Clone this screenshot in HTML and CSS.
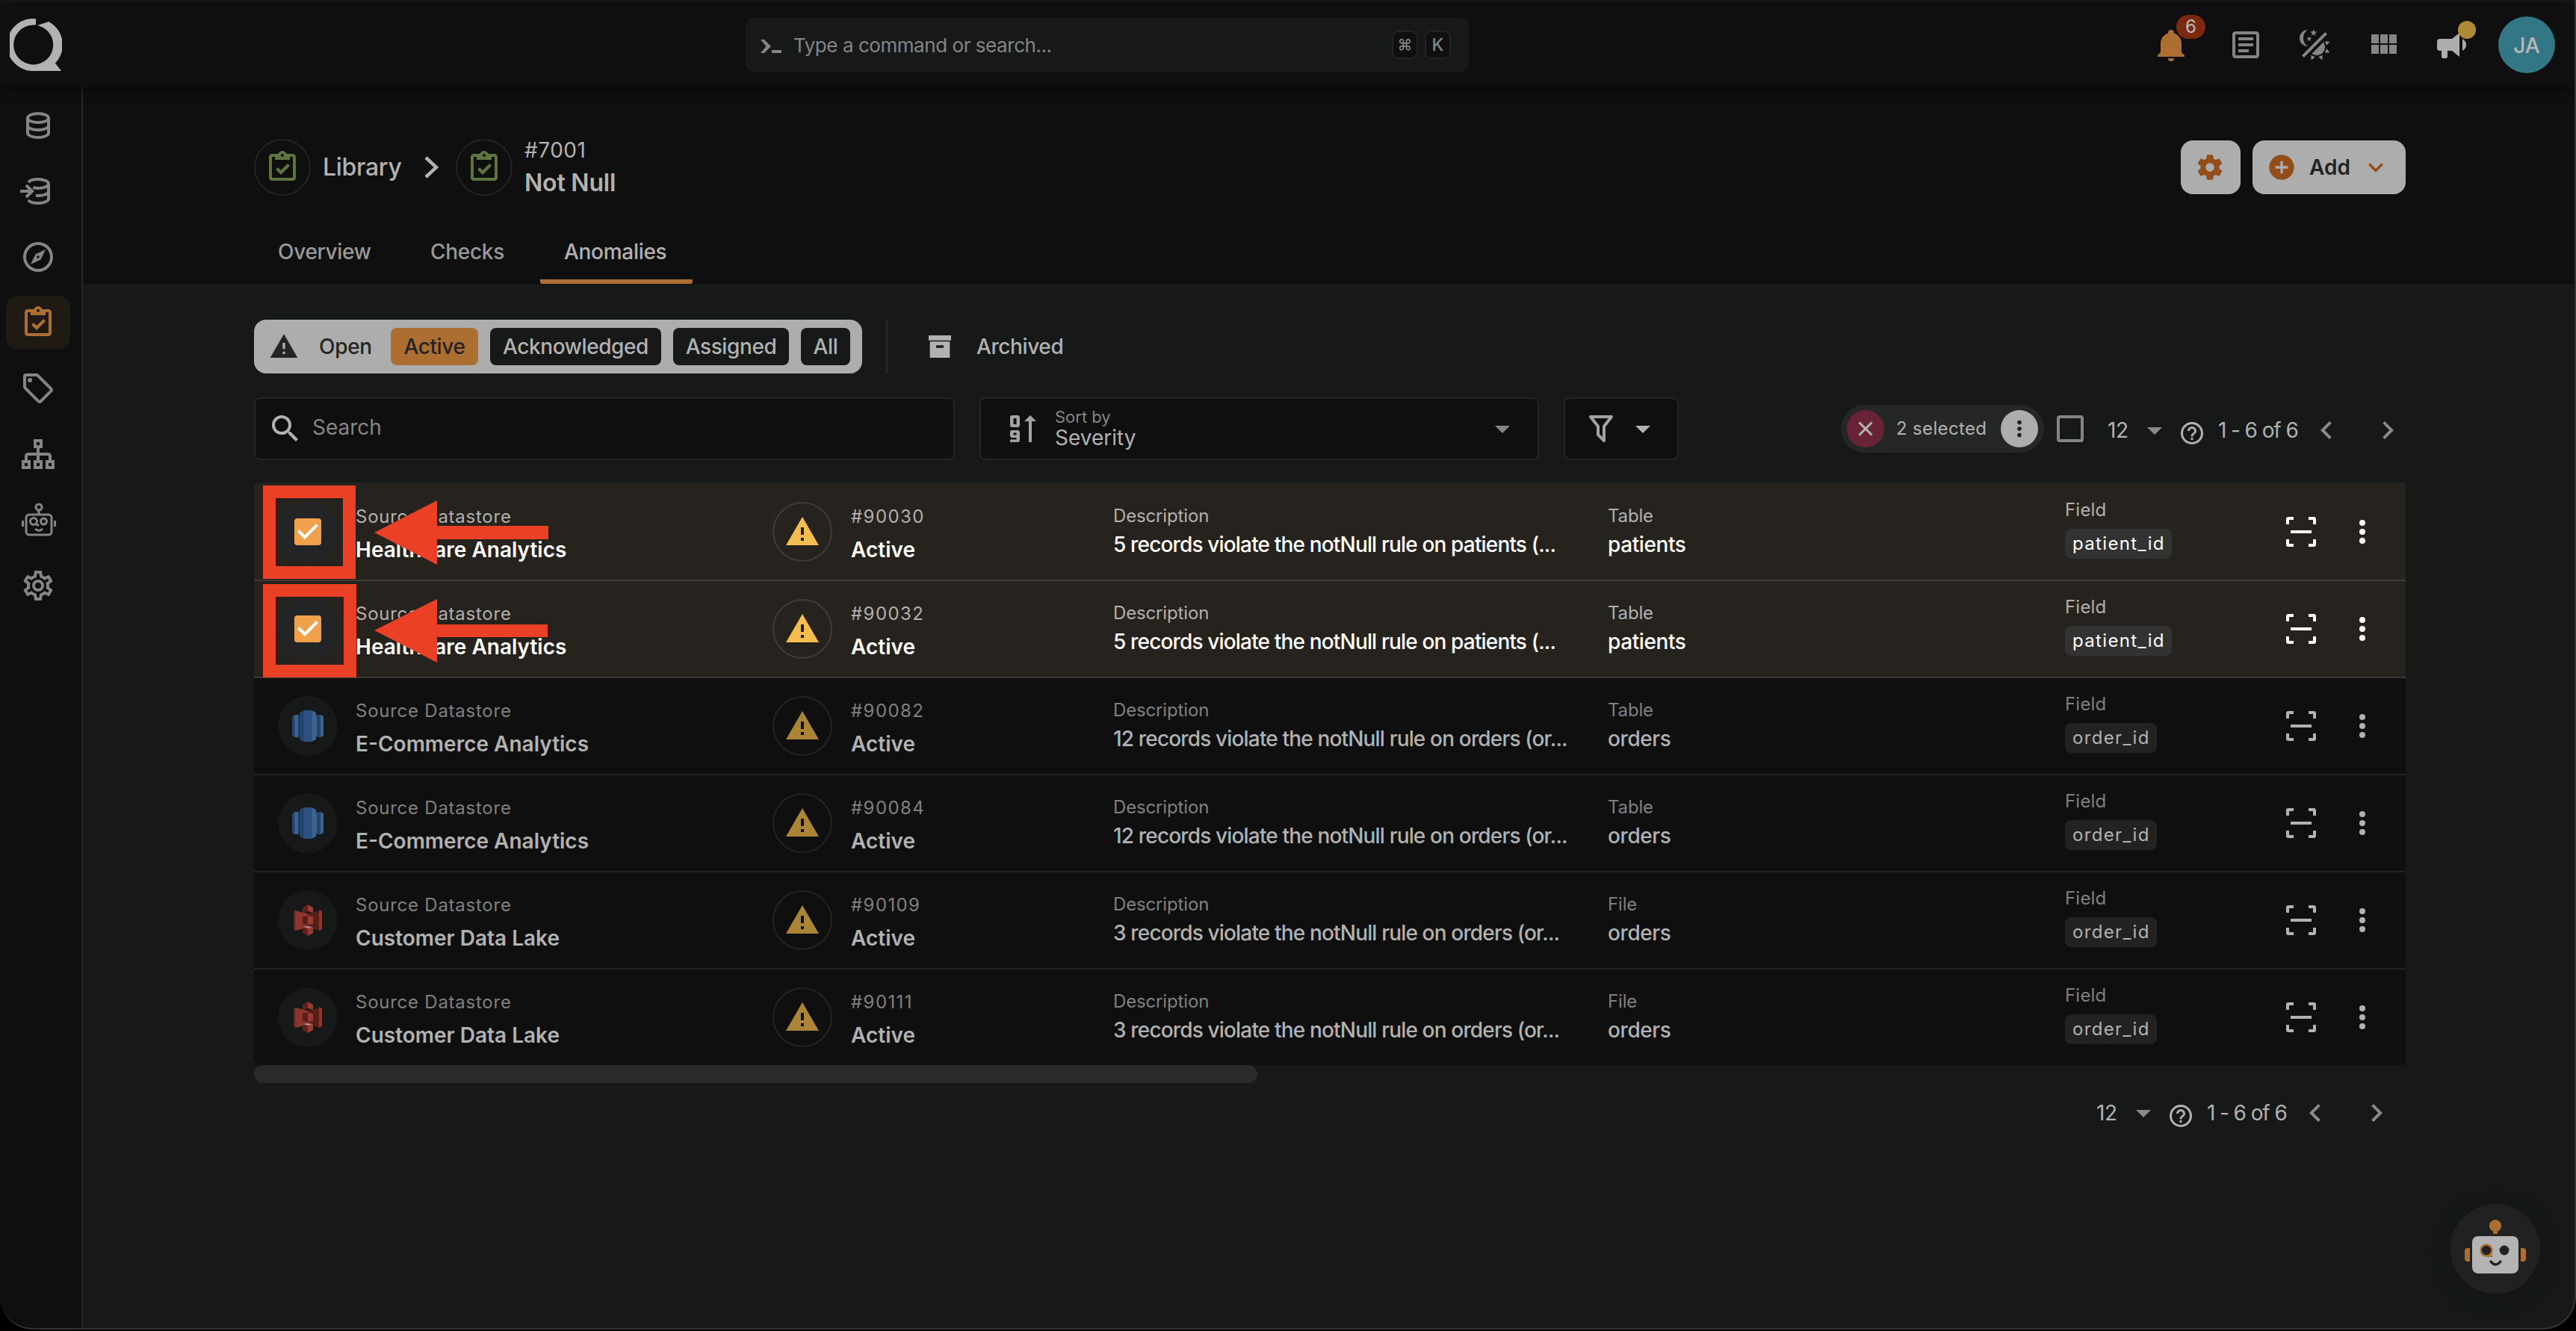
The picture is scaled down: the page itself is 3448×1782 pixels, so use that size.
FILE: index.html
```html
<!DOCTYPE html>
<html lang="en">
<head>
<meta charset="utf-8">
<title>Not Null - Anomalies</title>
<link rel="stylesheet" href="styles.css">
</head>
<body>
<svg class="sprite" aria-hidden="true">
  <symbol id="i-clip" viewBox="0 0 24 24"><path d="M19 3H14.82C14.4 1.84 13.3 1 12 1S9.6 1.84 9.18 3H5C3.9 3 3 3.9 3 5V19C3 20.1 3.9 21 5 21H19C20.1 21 21 20.1 21 19V5C21 3.9 20.1 3 19 3M12 3C12.55 3 13 3.45 13 4S12.55 5 12 5 11 4.55 11 4 11.45 3 12 3M7 7H17V5H19V19H5V5H7V7M7.5 13.5L9 12L11 14L15.5 9.5L17 11L11 17L7.5 13.5Z"/></symbol>
  <symbol id="i-alert" viewBox="0 0 24 24"><path d="M13 14H11V9H13M13 18H11V16H13M1 21H23L12 2L1 21Z"/></symbol>
  <symbol id="i-down" viewBox="0 0 24 24"><path d="M7 10L12 15L17 10H7Z"/></symbol>
  <symbol id="i-left" viewBox="0 0 24 24"><path d="M15.41 16.58L10.83 12L15.41 7.41L14 6L8 12L14 18L15.41 16.58Z"/></symbol>
  <symbol id="i-right" viewBox="0 0 24 24"><path d="M8.59 16.58L13.17 12L8.59 7.41L10 6L16 12L10 18L8.59 16.58Z"/></symbol>
  <symbol id="i-help" viewBox="0 0 24 24"><path d="M11 18H13V16H11V18M12 2A10 10 0 0 0 2 12A10 10 0 0 0 12 22A10 10 0 0 0 22 12A10 10 0 0 0 12 2M12 20C7.59 20 4 16.41 4 12S7.59 4 12 4 20 7.59 20 12 16.41 20 12 20M12 6A4 4 0 0 0 8 10H10A2 2 0 0 1 12 8A2 2 0 0 1 14 10C14 12 11 11.75 11 15H13C13 12.75 16 12.5 16 10A4 4 0 0 0 12 6Z"/></symbol>
  <symbol id="i-dots" viewBox="0 0 24 24"><path d="M12 16A2 2 0 0 1 14 18A2 2 0 0 1 12 20A2 2 0 0 1 10 18A2 2 0 0 1 12 16M12 10A2 2 0 0 1 14 12A2 2 0 0 1 12 14A2 2 0 0 1 10 12A2 2 0 0 1 12 10M12 4A2 2 0 0 1 14 6A2 2 0 0 1 12 8A2 2 0 0 1 10 6A2 2 0 0 1 12 4Z"/></symbol>
  <symbol id="i-scan" viewBox="0 0 24 24"><path d="M4 7H2V3.5A1.5 1.5 0 0 1 3.500 2H7V4H4ZM17 2H20.500A1.5 1.5 0 0 1 22 3.500V7H20V4H17ZM20 17H22V20.500A1.5 1.5 0 0 1 20.500 22H17V20H20ZM7 22H3.500A1.5 1.5 0 0 1 2 20.500V17H4V20H7ZM5 11H19V13H5Z"/></symbol>
  <symbol id="i-check" viewBox="0 0 24 24"><rect x="3" y="3" width="18" height="18" rx="2" fill="#f1a04c"/><path d="M10 17L5 12L6.410 10.590L10 14.170L17.590 6.580L19 8Z" fill="#fff"/></symbol>
  <symbol id="i-cog" viewBox="0 0 24 24"><path d="M12 15.500A3.500 3.500 0 0 1 8.500 12A3.500 3.500 0 0 1 12 8.500A3.500 3.500 0 0 1 15.500 12A3.500 3.500 0 0 1 12 15.500M19.430 12.970C19.470 12.650 19.500 12.330 19.500 12C19.500 11.670 19.470 11.340 19.430 11L21.540 9.370C21.730 9.220 21.780 8.950 21.660 8.730L19.660 5.270C19.540 5.050 19.270 4.960 19.050 5.050L16.560 6.050C16.040 5.660 15.500 5.320 14.870 5.070L14.500 2.420C14.460 2.180 14.250 2 14 2H10C9.750 2 9.540 2.180 9.500 2.420L9.130 5.070C8.500 5.320 7.960 5.660 7.440 6.050L4.950 5.050C4.730 4.960 4.460 5.050 4.340 5.270L2.340 8.730C2.210 8.950 2.270 9.220 2.460 9.370L4.570 11C4.530 11.340 4.500 11.670 4.500 12C4.500 12.330 4.530 12.650 4.570 12.970L2.460 14.630C2.270 14.780 2.210 15.050 2.340 15.270L4.340 18.730C4.460 18.950 4.730 19.030 4.950 18.950L7.440 17.940C7.960 18.340 8.500 18.680 9.130 18.930L9.500 21.580C9.540 21.820 9.750 22 10 22H14C14.250 22 14.460 21.820 14.500 21.580L14.870 18.930C15.500 18.670 16.040 18.340 16.560 17.940L19.050 18.950C19.270 19.030 19.540 18.950 19.660 18.730L21.660 15.270C21.780 15.050 21.730 14.780 21.540 14.630L19.430 12.970Z"/></symbol>
  <symbol id="i-redshift" viewBox="0 0 42 44">
    <path d="M0 9L4 7V37L0 35Z" fill="#24476f"/><path d="M3.500 7H8.500V37H3.500Z" fill="#3d6491"/><path d="M8.500 8H10.500V36H8.500Z" fill="#1d3a60"/>
    <path d="M31.500 8H33.500V36H31.500Z" fill="#3d6491"/><path d="M33.500 7H38.500V37H33.500Z" fill="#24476f"/><path d="M38 7L42 9V35L38 37Z" fill="#3d6491"/>
    <path d="M10 4L16 1V43L10 40Z" fill="#23436f"/><path d="M26 1L32 4V40L26 43Z" fill="#3d6491"/><path d="M15.500 1H26.500V43H15.500Z" fill="#2d5083"/>
  </symbol>
  <symbol id="i-s3" viewBox="0 0 38 44">
    <path d="M0 10L3 8V36L0 34Z" fill="#5f221c"/><path d="M2 9L19 13V32L2 36Z" fill="#8d362d"/><path d="M36 9L19 13V32L36 36Z" fill="#5a1e19"/><path d="M34 8L38 10V34L34 36Z" fill="#8d362d"/>
    <path d="M19 1L12 5V12L19 10Z" fill="#5f221c"/><path d="M19 1L26 5V12L19 10Z" fill="#983d33"/>
    <path d="M12 17L19 16V28L12 27Z" fill="#5a1e19"/><path d="M19 16L26 17V27L19 28Z" fill="#983d33"/>
    <path d="M12 32L19 31V43L12 39Z" fill="#5f221c"/><path d="M19 31L26 32V39L19 43Z" fill="#983d33"/><path d="M13 31L19 30L26 31L19 33Z" fill="#a98a88"/>
  </symbol>
</svg>

<div class="window">
  <header class="topbar">
    <div class="brand">
      <svg class="brand-mark" width="70" height="70" viewBox="13 23 70 70"><path d="M48 23A35 35 0 0 0 41 93H82L74 82.500A35 35 0 0 0 65 27L50 32A26.500 26.500 0 1 1 46 31.500L48 31Z"/></svg>
    </div>
    <div class="command">
      <svg class="prompt" width="28" height="18" viewBox="0 0 28 18"><path d="M0 0H5L14 9L5 18H0L7.500 9ZM15 14H28V18H15Z"/></svg>
      <span class="command-text">Type a command or search...</span>
      <kbd class="key">⌘</kbd><kbd class="key key-k">K</kbd>
    </div>
    <nav class="tools">
      <div class="tool bell">
        <svg class="icon" viewBox="0 0 24 24"><path d="M21 19V20H3V19L5 17V11C5 7.900 7.030 5.170 10 4.290C10 4.190 10 4.100 10 4A2 2 0 0 1 12 2A2 2 0 0 1 14 4C14 4.100 14 4.190 14 4.290C16.970 5.170 19 7.900 19 11V17L21 19M14 21A2 2 0 0 1 12 23A2 2 0 0 1 10 21"/></svg>
        <span class="badge">6</span>
      </div>
      <svg class="icon tool-doc" viewBox="0 0 24 24"><path d="M5 3C3.890 3 3 3.890 3 5V19C3 20.110 3.890 21 5 21H19C20.110 21 21 20.110 21 19V5C21 3.890 20.110 3 19 3H5M5 5H19V19H5V5M7 7V9H17V7H7M7 11V13H17V11H7M7 15V17H14V15H7Z"/></svg>
      <svg class="icon" viewBox="0 0 24 24"><path d="M7.500 2C5.710 3.150 4.500 5.180 4.500 7.500C4.500 9.820 5.710 11.850 7.530 13C4.460 13 2 10.540 2 7.500A5.500 5.500 0 0 1 7.500 2M19.070 3.500L20.500 4.930L4.930 20.500L3.500 19.070L19.070 3.500M12.890 5.930L11.410 5L9.970 6L10.390 4.300L9 3.240L10.750 3.120L11.330 1.470L12 3.100L13.730 3.130L12.380 4.260L12.890 5.930M9.590 9.540L8.430 8.810L7.310 9.590L7.650 8.270L6.560 7.440L7.920 7.350L8.370 6.060L8.880 7.330L10.240 7.360L9.190 8.230L9.590 9.540M19 13.500A5.500 5.500 0 0 1 13.500 19C12.280 19 11.150 18.600 10.240 17.930L17.930 10.240C18.600 11.150 19 12.280 19 13.500M14.600 20.080L17.370 18.930L17.130 22.280L14.600 20.080M18.930 17.380L20.080 14.610L22.280 17.150L18.930 17.380M20.080 12.420L18.940 9.640L22.280 9.880L20.080 12.420M9.630 18.930L12.400 20.080L9.870 22.270L9.630 18.930Z"/></svg>
      <svg class="icon" viewBox="0 0 24 24"><path d="M16 5V11H21V5M10 11H15V5H10M16 18H21V12H16M10 18H15V12H10M4 18H9V12H4M4 11H9V5H4V11Z"/></svg>
      <div class="tool horn">
        <svg class="icon" viewBox="0 0 24 24"><path d="M12 8H4A2 2 0 0 0 2 10V14A2 2 0 0 0 4 16H5V20A1 1 0 0 0 6 21H8A1 1 0 0 0 9 20V16H12L17 20V4L12 8M21.500 12C21.500 13.710 20.540 15.260 19 16V8C20.530 8.750 21.500 10.300 21.500 12Z"/></svg>
        <span class="dot"></span>
      </div>
      <div class="avatar">JA</div>
    </nav>
  </header>

  <div class="shell">
    <aside class="sidebar">
      <div class="side-item"><svg class="icon line" viewBox="0 0 24 24"><ellipse cx="12" cy="7" rx="7" ry="3"/><path d="M5 7V17C5 18.660 8.130 20 12 20S19 18.660 19 17V7M5 12C5 13.660 8.130 15 12 15S19 13.660 19 12"/></svg></div>
      <div class="side-item"><svg class="icon line" viewBox="0 0 24 24"><path d="M5.500 6C6.500 4.700 9 4 12 4C15.870 4 19 5.340 19 7S15.870 10 12 10C10.500 10 9.500 9.800 8.600 9.500M19 7V17C19 18.660 15.870 20 12 20C9 20 6.500 19.300 5.500 18M10.500 14.900L12 15C15.870 15 19 13.660 19 12"/><path d="M0 12H7M4 8L8 12L4 16"/></svg></div>
      <div class="side-item"><svg class="icon" viewBox="0 0 24 24"><path d="M7 17L10.200 10.200L17 7L13.800 13.800L7 17M12 11.100A0.900 0.900 0 0 0 11.100 12A0.900 0.900 0 0 0 12 12.900A0.900 0.900 0 0 0 12.900 12A0.900 0.900 0 0 0 12 11.100M12 2A10 10 0 0 1 22 12A10 10 0 0 1 12 22A10 10 0 0 1 2 12A10 10 0 0 1 12 2M12 4A8 8 0 0 0 4 12A8 8 0 0 0 12 20A8 8 0 0 0 20 12A8 8 0 0 0 12 4Z"/></svg></div>
      <div class="side-item active"><svg class="icon"><use href="#i-clip"/></svg></div>
      <div class="side-item"><svg class="icon" viewBox="0 0 24 24"><path d="M21.410 11.580L12.410 2.580A2 2 0 0 0 11 2H4A2 2 0 0 0 2 4V11A2 2 0 0 0 2.590 12.420L11.590 21.420A2 2 0 0 0 13 22A2 2 0 0 0 14.410 21.410L21.410 14.410A2 2 0 0 0 22 13A2 2 0 0 0 21.410 11.580M13 20L4 11V4H11L20 13M6.500 5A1.500 1.500 0 1 1 5 6.500A1.500 1.500 0 0 1 6.500 5Z"/></svg></div>
      <div class="side-item"><svg class="icon line" viewBox="0 0 24 24"><path d="M10 3H14V7H10ZM2 17H6V21H2ZM10 17H14V21H10ZM18 17H22V21H18ZM12 8V16M4 16V13.500Q4 12 5.500 12H18.500Q20 12 20 13.500V16"/></svg></div>
      <div class="side-item"><svg class="icon robot" viewBox="0 0 48 48"><rect x="8" y="17" width="34" height="27" rx="4"/><circle cx="25" cy="7" r="4"/><path d="M25 11V17M3.500 25V33M46.500 25V33M20 36Q25 41 30 36M21 29L25 32"/><circle cx="18" cy="26" r="4.500"/><circle cx="31.500" cy="26" r="4"/></svg></div>
      <div class="side-item"><svg class="icon" viewBox="0 0 24 24"><path d="M12 8A4 4 0 0 1 16 12A4 4 0 0 1 12 16A4 4 0 0 1 8 12A4 4 0 0 1 12 8M12 10A2 2 0 0 0 10 12A2 2 0 0 0 12 14A2 2 0 0 0 14 12A2 2 0 0 0 12 10M10 22C9.750 22 9.540 21.820 9.500 21.580L9.130 18.930C8.500 18.680 7.960 18.340 7.440 17.940L4.950 18.950C4.730 19.030 4.460 18.950 4.340 18.730L2.340 15.270C2.210 15.050 2.270 14.780 2.460 14.630L4.570 12.970L4.500 12L4.570 11L2.460 9.370C2.270 9.220 2.210 8.950 2.340 8.730L4.340 5.270C4.460 5.050 4.730 4.960 4.950 5.050L7.440 6.050C7.960 5.660 8.500 5.320 9.130 5.070L9.500 2.420C9.540 2.180 9.750 2 10 2H14C14.250 2 14.460 2.180 14.500 2.420L14.870 5.070C15.500 5.320 16.040 5.660 16.560 6.050L19.050 5.050C19.270 4.960 19.540 5.050 19.660 5.270L21.660 8.730C21.790 8.950 21.730 9.220 21.540 9.370L19.430 11L19.500 12L19.430 13L21.540 14.630C21.730 14.780 21.790 15.050 21.660 15.270L19.660 18.730C19.540 18.950 19.270 19.040 19.050 18.950L16.560 17.950C16.040 18.340 15.500 18.680 14.870 18.930L14.500 21.580C14.460 21.820 14.250 22 14 22H10M11.250 4L10.880 6.610C9.680 6.860 8.620 7.500 7.850 8.390L5.440 7.350L4.690 8.650L6.800 10.200C6.400 11.370 6.400 12.640 6.800 13.800L4.680 15.360L5.430 16.660L7.860 15.620C8.630 16.500 9.680 17.140 10.870 17.380L11.240 20H12.760L13.130 17.390C14.320 17.140 15.370 16.500 16.140 15.620L18.570 16.660L19.320 15.360L17.200 13.810C17.600 12.640 17.600 11.370 17.200 10.200L19.310 8.650L18.560 7.350L16.150 8.390C15.380 7.500 14.320 6.860 13.120 6.620L12.750 4H11.250Z"/></svg></div>
    </aside>

    <main class="main">
      <section class="page-head">
        <div class="crumbs">
          <span class="ring"><svg class="icon"><use href="#i-clip"/></svg></span>
          <span class="crumb">Library</span>
          <svg class="crumb-sep" width="22" height="30" viewBox="0 0 22 30"><path d="M3 2L17 15L3 28"/></svg>
          <span class="ring"><svg class="icon"><use href="#i-clip"/></svg></span>
          <div class="crumb-current"><span class="crumb-id">#7001</span><span class="crumb-name">Not Null</span></div>
          <button class="btn btn-icon"><svg class="icon-m"><use href="#i-cog"/></svg></button>
          <button class="btn btn-add">
            <svg class="icon-m" viewBox="0 0 24 24"><path d="M17 13H13V17H11V13H7V11H11V7H13V11H17M12 2A10 10 0 0 0 2 12A10 10 0 0 0 12 22A10 10 0 0 0 22 12A10 10 0 0 0 12 2Z"/></svg>
            <span class="btn-label">Add</span>
            <svg class="icon-m" viewBox="0 0 24 24"><path d="M7.410 8.580L12 13.170L16.590 8.580L18 10L12 16L6 10L7.410 8.580Z"/></svg>
          </button>
        </div>
        <div class="tabs">
          <span class="tab tab-1">Overview</span><span class="tab tab-2">Checks</span><span class="tab tab-3 current">Anomalies</span>
        </div>
      </section>

      <section class="content">
        <div class="status-row">
          <div class="segment">
            <svg class="icon-m"><use href="#i-alert"/></svg>
            <span class="segment-name">Open</span>
            <span class="pill p1 on">Active</span><span class="pill p2">Acknowledged</span><span class="pill p3">Assigned</span><span class="pill p4">All</span>
          </div>
          <i class="divider"></i>
          <div class="archived">
            <svg class="icon-m" viewBox="0 0 24 24"><path d="M3 3H21V7H3V3M4 8H20V21H4V8M9.500 11A0.500 0.500 0 0 0 9 11.500V13H15V11.500A0.500 0.500 0 0 0 14.500 11H9.500Z"/></svg>
            <span>Archived</span>
          </div>
        </div>

        <div class="filter-row">
          <div class="box search">
            <svg class="icon" viewBox="0 0 24 24"><path d="M9.500 3A6.500 6.500 0 0 1 16 9.500C16 11.110 15.410 12.590 14.440 13.730L14.710 14H15.500L20.500 19L19 20.500L14 15.500V14.710L13.730 14.440C12.590 15.410 11.110 16 9.500 16A6.500 6.500 0 0 1 3 9.500A6.500 6.500 0 0 1 9.500 3M9.500 5C7 5 5 7 5 9.500S7 14 9.500 14 14 12 14 9.500 12 5 9.500 5Z"/></svg>
            <span class="search-hint">Search</span>
          </div>
          <div class="box sort">
            <svg class="icon sort-icon" viewBox="0 0 48 48"><path d="M9 6H17Q20 6 20 9V19Q20 22 17 22H10Q7 22 7 19V9Q7 6 10 6ZM11.500 10V18H15.500V10ZM10 26H17Q20 26 20 29V39Q20 42 17 42H7V38.500H15.500V36H10Q7 36 7 33V29Q7 26 10 26ZM11.500 29.500V32.500H15.500V29.500Z" fill-rule="evenodd"/><path d="M32 14V42H36V14H42L34 6L26 14Z"/></svg>
            <div class="sort-text"><span class="sort-label">Sort by</span><span class="sort-value">Severity</span></div>
            <svg class="icon sort-caret"><use href="#i-down"/></svg>
          </div>
          <div class="box filter">
            <svg class="icon" viewBox="0 0 24 24"><path d="M15 19.880C15.040 20.180 14.940 20.500 14.710 20.710C14.320 21.100 13.690 21.100 13.300 20.710L9.290 16.700C9.060 16.470 8.960 16.160 9 15.870V10.750L4.210 4.620C3.870 4.190 3.950 3.560 4.380 3.220C4.570 3.080 4.780 3 5 3H19C19.220 3 19.430 3.080 19.620 3.220C20.050 3.560 20.130 4.190 19.790 4.620L15 10.750V19.880M7.040 5L11 10.060V15.580L13 17.580V10.050L16.960 5H7.040Z"/></svg>
            <svg class="icon filter-caret"><use href="#i-down"/></svg>
          </div>
          <div class="selection">
            <span class="round clear"><svg width="20" height="20" viewBox="0 0 20 20"><path d="M1.500 1.500L18.500 18.500M18.500 1.500L1.500 18.500"/></svg></span>
            <span class="selection-text">2 selected</span>
            <span class="round more"><svg width="34" height="34"><use href="#i-dots"/></svg></span>
          </div>
          <svg class="icon select-all" viewBox="0 0 24 24"><path d="M19 3H5C3.890 3 3 3.890 3 5V19A2 2 0 0 0 5 21H19A2 2 0 0 0 21 19V5C21 3.890 20.100 3 19 3M19 5V19H5V5H19Z"/></svg>
          <div class="pager">
            <span class="per-page">12</span><svg class="icon"><use href="#i-down"/></svg>
            <svg class="help"><use href="#i-help"/></svg><span class="range">1 - 6 of 6</span>
            <svg class="icon"><use href="#i-left"/></svg><svg class="icon next"><use href="#i-right"/></svg>
          </div>
        </div>

        <div class="table">
          <div class="row selected">
            <div class="thumb"><svg class="icon"><use href="#i-check"/></svg><svg class="mark" width="384" height="126" viewBox="0 0 384 126"><rect x="8.500" y="8.500" width="107" height="108"/><path d="M149 63L233 20V54H382V72H233V106Z"/></svg></div>
            <div class="pair store"><span class="label">Source Datastore</span><span class="value strong">Healthcare Analytics</span></div>
            <div class="warn"><svg class="icon"><use href="#i-alert"/></svg></div>
            <div class="pair ident"><span class="label num">#90030</span><span class="value strong">Active</span></div>
            <div class="pair tight"><span class="label plain">Description</span><span class="value desc">5 records violate the notNull rule on patients (...</span></div>
            <div class="pair tight"><span class="label plain">Table</span><span class="value obj">patients</span></div>
            <div class="field"><span class="label">Field</span><span class="chip">patient_id</span></div>
            <svg class="icon act"><use href="#i-scan"/></svg><svg class="icon act"><use href="#i-dots"/></svg>
          </div>
          <div class="row selected last-selected">
            <div class="thumb"><svg class="icon"><use href="#i-check"/></svg><svg class="mark mark-2" width="384" height="126" viewBox="0 0 384 126"><rect x="8.500" y="8.500" width="108" height="108"/><path d="M149 62L233 20V54H381V71H233V105Z"/></svg></div>
            <div class="pair store"><span class="label">Source Datastore</span><span class="value strong">Healthcare Analytics</span></div>
            <div class="warn"><svg class="icon"><use href="#i-alert"/></svg></div>
            <div class="pair ident"><span class="label num">#90032</span><span class="value strong">Active</span></div>
            <div class="pair tight"><span class="label plain">Description</span><span class="value desc">5 records violate the notNull rule on patients (...</span></div>
            <div class="pair tight"><span class="label plain">Table</span><span class="value obj">patients</span></div>
            <div class="field"><span class="label">Field</span><span class="chip">patient_id</span></div>
            <svg class="icon act"><use href="#i-scan"/></svg><svg class="icon act"><use href="#i-dots"/></svg>
          </div>
          <div class="row">
            <div class="thumb"><svg width="42" height="44"><use href="#i-redshift"/></svg></div>
            <div class="pair store"><span class="label">Source Datastore</span><span class="value strong">E-Commerce Analytics</span></div>
            <div class="warn"><svg class="icon"><use href="#i-alert"/></svg></div>
            <div class="pair ident"><span class="label num">#90082</span><span class="value strong">Active</span></div>
            <div class="pair tight"><span class="label plain">Description</span><span class="value desc">12 records violate the notNull rule on orders (or...</span></div>
            <div class="pair tight"><span class="label plain">Table</span><span class="value obj">orders</span></div>
            <div class="field"><span class="label">Field</span><span class="chip">order_id</span></div>
            <svg class="icon act"><use href="#i-scan"/></svg><svg class="icon act"><use href="#i-dots"/></svg>
          </div>
          <div class="row">
            <div class="thumb"><svg width="42" height="44"><use href="#i-redshift"/></svg></div>
            <div class="pair store"><span class="label">Source Datastore</span><span class="value strong">E-Commerce Analytics</span></div>
            <div class="warn"><svg class="icon"><use href="#i-alert"/></svg></div>
            <div class="pair ident"><span class="label num">#90084</span><span class="value strong">Active</span></div>
            <div class="pair tight"><span class="label plain">Description</span><span class="value desc">12 records violate the notNull rule on orders (or...</span></div>
            <div class="pair tight"><span class="label plain">Table</span><span class="value obj">orders</span></div>
            <div class="field"><span class="label">Field</span><span class="chip">order_id</span></div>
            <svg class="icon act"><use href="#i-scan"/></svg><svg class="icon act"><use href="#i-dots"/></svg>
          </div>
          <div class="row">
            <div class="thumb"><svg width="38" height="44"><use href="#i-s3"/></svg></div>
            <div class="pair store"><span class="label">Source Datastore</span><span class="value strong">Customer Data Lake</span></div>
            <div class="warn"><svg class="icon"><use href="#i-alert"/></svg></div>
            <div class="pair ident"><span class="label num">#90109</span><span class="value strong">Active</span></div>
            <div class="pair tight"><span class="label plain">Description</span><span class="value desc">3 records violate the notNull rule on orders (or...</span></div>
            <div class="pair tight"><span class="label plain">File</span><span class="value obj">orders</span></div>
            <div class="field"><span class="label">Field</span><span class="chip">order_id</span></div>
            <svg class="icon act"><use href="#i-scan"/></svg><svg class="icon act"><use href="#i-dots"/></svg>
          </div>
          <div class="row">
            <div class="thumb"><svg width="38" height="44"><use href="#i-s3"/></svg></div>
            <div class="pair store"><span class="label">Source Datastore</span><span class="value strong">Customer Data Lake</span></div>
            <div class="warn"><svg class="icon"><use href="#i-alert"/></svg></div>
            <div class="pair ident"><span class="label num">#90111</span><span class="value strong">Active</span></div>
            <div class="pair tight"><span class="label plain">Description</span><span class="value desc">3 records violate the notNull rule on orders (or...</span></div>
            <div class="pair tight"><span class="label plain">File</span><span class="value obj">orders</span></div>
            <div class="field"><span class="label">Field</span><span class="chip">order_id</span></div>
            <svg class="icon act"><use href="#i-scan"/></svg><svg class="icon act"><use href="#i-dots"/></svg>
          </div>
        </div>
        <div class="scrollbar"></div>

        <div class="pager pager-bottom">
          <span class="per-page">12</span><svg class="icon"><use href="#i-down"/></svg>
          <svg class="help"><use href="#i-help"/></svg><span class="range">1 - 6 of 6</span>
          <svg class="icon"><use href="#i-left"/></svg><svg class="icon next"><use href="#i-right"/></svg>
        </div>
      </section>
    </main>
  </div>

  <div class="assistant">
    <svg width="120" height="120" viewBox="0 0 120 120">
      <path d="M57 36.500A8 8 0 1 1 63 36.500V40H57Z" fill="#ad6e32"/>
      <path d="M26 59V77H23Q19 77 19 73V63Q19 59 23 59ZM94 59V77H97Q101 77 101 73V63Q101 59 97 59Z" fill="#ad6e32"/>
      <rect x="29" y="43" width="62" height="50" rx="8" fill="#b4b4b4"/>
      <ellipse cx="48" cy="62" rx="7.500" ry="7.500" fill="#222" stroke="#ad6e32" stroke-width="2.500"/><path d="M50 68L54 66L57 71H49Z" fill="#ad6e32"/>
      <circle cx="72" cy="62" r="6.400" fill="#222"/>
      <path d="M54 77Q60 85 67 77" fill="none" stroke="#222" stroke-width="3.400" stroke-linecap="round"/>
    </svg>
  </div>
</div>
</body>
</html>
```
FILE: styles.css
```css
* { box-sizing: border-box; }
body {
  margin: 0;
  background: #000;
  font-family: Inter, "Liberation Sans", sans-serif;
  font-size: 28px;
  line-height: 40px;
  color: #b2b2b2;
  width: 3448px;
  height: 1782px;
  overflow: hidden;
}
svg { display: block; flex: none; fill: currentColor; }
.sprite { position: absolute; width: 0; height: 0; }
.icon { width: 48px; height: 48px; }
.icon-m { width: 40px; height: 40px; }

.window {
  width: 3448px;
  height: 1780px;
  padding-top: 4px;
  background: #161918;
  border: solid #333535;
  border-width: 0 2px 2px 0;
  border-radius: 0 0 44px 44px;
  overflow: hidden;
}

/* top bar */
.topbar {
  display: flex;
  align-items: center;
  height: 112px;
  background: #0f0f0f;
  box-shadow: 0 2px 14px rgba(0, 0, 0, .5);
  position: relative;
}
.brand { width: 998px; padding-left: 13px; }
.command {
  display: flex;
  align-items: center;
  width: 968px;
  height: 72px;
  padding: 0 24px 0 20px;
  background: #161918;
  border-radius: 10px;
  color: #858585;
}
.prompt { margin-top: 3px; }
.command-text { margin: 1px auto 0 16px; letter-spacing: -.45px; font-size: 26px; }
.key {
  display: flex;
  align-items: center;
  justify-content: center;
  width: 35px;
  height: 38px;
  margin-left: 9px;
  background: #0f0f0f;
  border: 2px solid #242424;
  border-radius: 9px;
  font: 500 20px/30px Inter, "DejaVu Sans", sans-serif;
}
.key-k { font-size: 23px; }
.tools {
  display: flex;
  align-items: center;
  gap: 44px;
  margin-left: auto;
  margin-right: 26px;
  color: #858585;
}
.tool { position: relative; }
.bell { color: #ad6e32; margin-right: 8px; }
.horn { color: #adadad; margin-right: -6px; }
.badge {
  position: absolute;
  left: 31px;
  top: -16px;
  width: 39px;
  height: 32px;
  border-radius: 16px;
  background: #7c290f;
  color: #bdbdbd;
  font-size: 24px;
  line-height: 32px;
  text-align: center;
}
.dot {
  position: absolute;
  left: 32px;
  top: -8px;
  width: 24px;
  height: 24px;
  border-radius: 50%;
  background: #b08937;
}
.avatar {
  width: 76px;
  height: 76px;
  border-radius: 50%;
  background: #337686;
  color: #b8b8b8;
  font-weight: 500;
  line-height: 78px;
  text-align: center;
}

/* sidebar */
.shell { display: flex; }
.sidebar {
  display: flex;
  flex-direction: column;
  gap: 16px;
  width: 112px;
  height: 1664px;
  padding: 16px 0 0 8px;
  background: #0f0f0f;
  border-right: 2px solid #272727;
  color: #858585;
}
.side-item {
  display: flex;
  align-items: center;
  justify-content: center;
  width: 86px;
  height: 72px;
  border-radius: 16px;
}
.side-item.active { background: #1f1a14; color: #ad6e32; }
.line { fill: none; stroke: currentColor; stroke-width: 2; }
.robot { fill: none; stroke: currentColor; stroke-width: 3; overflow: visible; }

/* page head */
.main { flex: 1; }
.page-head {
  height: 264px;
  padding: 70px 226px 0 229px;
  background: #0f0f0f;
}
.crumbs { display: flex; align-items: center; height: 76px; }
.ring {
  display: flex;
  align-items: center;
  justify-content: center;
  width: 76px;
  height: 76px;
  border: 2px solid #242424;
  border-radius: 50%;
  color: #5d7340;
}
.crumb {
  width: 134px;
  padding-left: 16px;
  font-size: 32px;
  font-weight: 500;
  letter-spacing: -.3px;
}
.crumb-sep { margin: 0 21px 0 17px; fill: none; stroke: currentColor; stroke-width: 4.500; }
.crumb-current {
  display: flex;
  flex-direction: column;
  margin: -2px auto 0 16px;
}
.crumb-id { line-height: 44px; letter-spacing: .5px; }
.crumb-name { font-size: 32px; font-weight: 600; line-height: 44px; letter-spacing: -.2px; }
.btn {
  display: flex;
  align-items: center;
  height: 72px;
  margin: 0;
  border: 0;
  border-radius: 16px;
  background: #adadad;
  color: #934d18;
  font: 600 28px/40px Inter, sans-serif;
}
.btn-icon { width: 80px; padding: 0 19px; }
.btn-add { width: 205px; margin-left: 16px; padding: 0 19px; }
.btn-label { width: 69px; margin-left: 17px; text-align: left; color: #222; }
.tabs { display: flex; height: 86px; margin-top: 32px; }
.tab { padding: 0 32px; line-height: 86px; color: #999; font-weight: 500; letter-spacing: -.3px; }
.tab-1 { width: 204px; }
.tab-2 { width: 179px; }
.tab-3 { width: 204px; }
.tab.current { color: #b2b2b2; border-bottom: 6px solid #ad6e32; border-radius: 3px; }

/* content */
.content { padding: 48px 226px 0 229px; }
.status-row { display: flex; align-items: center; height: 72px; }
.segment {
  display: flex;
  align-items: center;
  gap: 16px;
  width: 814px;
  height: 72px;
  padding-left: 20px;
  border-radius: 16px;
  background: #adadad;
  color: #242424;
  font-weight: 500;
}
.segment-name { width: 80px; margin-left: 11px; letter-spacing: -.3px; }
.pill {
  height: 50px;
  border-radius: 8px;
  background: #161918;
  color: #b2b2b2;
  line-height: 51px;
  text-align: center;
  letter-spacing: -.4px;
}
.pill.on { background: #ad6e32; color: #242424; }
.p1 { width: 117px; }
.p2 { width: 229px; }
.p3 { width: 155px; }
.p4 { width: 66px; }
.divider { width: 2px; height: 72px; margin: 0 50px 0 32px; background: #2a2c2b; }
.archived { display: flex; align-items: center; gap: 29px; font-weight: 500; letter-spacing: -.4px; }

.filter-row { display: flex; align-items: center; height: 84px; margin-top: 32px; }
.filter-row > * { flex: none; }
.box {
  display: flex;
  align-items: center;
  height: 84px;
  border: 2px solid #242625;
  border-radius: 8px;
  background: #0f0f0f;
}
.search { width: 938px; padding-left: 16px; }
.search-hint { margin-left: 12px; margin-top: -4px; color: #858585; }
.sort { width: 749px; margin-left: 33px; padding-left: 32px; }
.sort-icon { color: #a3a3a3; }
.sort-text { display: flex; flex-direction: column; margin-left: 19px; margin-top: -3px; }
.sort-label { font-size: 22px; line-height: 28px; color: #858585; }
.sort-value { line-height: 29px; }
.sort-caret { margin-left: auto; margin-right: 23px; color: #858585; }
.filter { width: 154px; margin-left: 33px; padding-left: 24px; color: #a3a3a3; }
.filter-caret { margin-left: 8px; color: #b2b2b2; }
.selection {
  display: flex;
  align-items: center;
  width: 272px;
  height: 64px;
  margin-left: 217px;
  padding: 0 8px;
  border-radius: 32px;
  background: #242726;
}
.round {
  display: flex;
  align-items: center;
  justify-content: center;
  width: 50px;
  height: 50px;
  border-radius: 50%;
}
.clear { background: #682436; }
.clear svg { stroke: #b4b4b4; stroke-width: 3; }
.more { background: #adadad; color: #242424; margin-left: auto; }
.selection-text { margin-left: 16px; margin-top: -1px; font-size: 24px; letter-spacing: .35px; }
.select-all { margin-left: 11px; color: #858585; }

.pager { display: flex; align-items: center; height: 48px; margin-left: 26px; margin-top: 4px; color: #8a8a8a; }
.per-page { width: 39px; color: #b2b2b2; letter-spacing: -.5px; }
.help { width: 36px; height: 36px; margin: 7px 17px 0 8px; color: #b2b2b2; }
.range { width: 121px; color: #b2b2b2; white-space: nowrap; letter-spacing: -1.1px; }
.next { margin-left: 34px; }

/* table */
.table {
  margin-top: 30px;
  background: #0f0f0f;
  border-top: 2px solid #242625;
  border-radius: 8px 0 0 8px;
}
.row {
  display: grid;
  grid-template-columns: 104px 558px 105px 351px 662px 612px 292px 82px 82px;
  align-items: center;
  height: 130px;
  padding-left: 32px;
  border-bottom: 2px solid #242424;
}
.row:last-child { border-bottom: 0; height: 128px; }
.row.selected { background: #26221e; border-color: #403d39; }
.row.last-selected { border-color: #393939; }
.thumb {
  position: relative;
  display: flex;
  align-items: center;
  justify-content: center;
  width: 80px;
  height: 80px;
  border-radius: 50%;
  background: #161918;
}
.selected .thumb { background: #232425; }
.mark { position: absolute; left: -20px; top: -22px; fill: #ea4126; }
.mark rect { fill: none; stroke: #ea4126; stroke-width: 17; }
.mark-2 { top: -20px; }
.warn {
  display: flex;
  align-items: center;
  justify-content: center;
  width: 80px;
  height: 80px;
  border: 2px solid #242424;
  border-radius: 50%;
  color: #ac8436;
}
.selected .warn { border-color: #403c39; color: #f5bc50; }
.pair { display: flex; flex-direction: column; padding-top: 3px; line-height: 44px; white-space: nowrap; }
.label { font-size: 24px; color: #808080; letter-spacing: .2px; }
.store .label { letter-spacing: .75px; }
.ident .label { letter-spacing: 1.4px; }
.tight .plain { letter-spacing: -.15px; }
.value { color: #b2b2b2; font-weight: 500; }
.strong { letter-spacing: 0; font-weight: 600; }
.tight { padding: 0 0 5px; line-height: 39px; }
.tight .desc { letter-spacing: -.84px; }
.tight .obj { letter-spacing: -.4px; }
.field { display: flex; flex-direction: column; align-items: flex-start; gap: 8px; padding-bottom: 10px; }
.field .label { line-height: 34px; }
.chip {
  height: 40px;
  padding: 0 9px 0 10px;
  border-radius: 8px;
  background: #222;
  font-size: 24px;
  line-height: 40px;
  letter-spacing: 1.35px;
}
.selected .label { color: #b3b0ad; }
.selected .value, .selected .chip, .selected .act { color: #fff; }
.selected .chip { background: #323232; }
.scrollbar { width: 1343px; height: 24px; border-radius: 12px; background: #292a2b; }
.pager-bottom { margin: 16px 0 0 2466px; }

.assistant {
  position: absolute;
  left: 3280px;
  top: 1612px;
  width: 120px;
  height: 120px;
  border-radius: 50%;
  background: #212121;
  box-shadow: 0 6px 24px rgba(20, 20, 26, .9);
}
```
